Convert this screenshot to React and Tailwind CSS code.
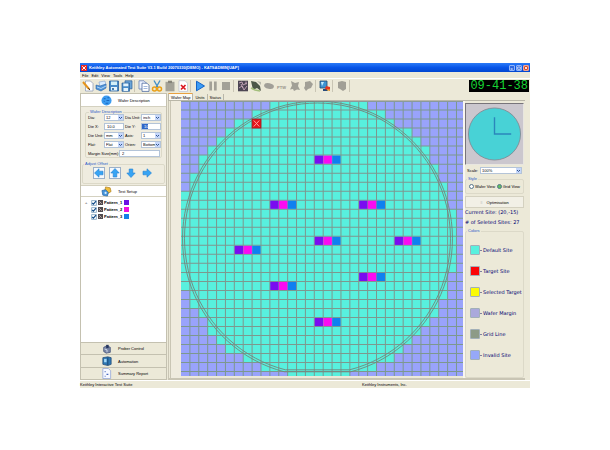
import React from "react";

const LEFT = [10, 8, 6, 5, 4, 3, 2, 2, 1, 1, 0, 0, 0, 0, 0, 0, 0, 0, 0, 0, 0, 1, 1, 2, 3, 3, 4, 5, 7, 9, 12];
const RIGHT = [21, 23, 24, 26, 27, 28, 28, 29, 29, 30, 30, 30, 31, 31, 31, 31, 31, 31, 31, 30, 30, 30, 29, 29, 28, 27, 26, 25, 24, 22, 19];
const SITES = [[15, 6], [10, 11], [20, 11], [15, 15], [24, 15], [6, 16], [20, 19], [10, 20], [15, 24]];
const CW = 8.855;
const CH = 9.02;
const W = 281;
const H = 275;

function WaferMap() {
  return (
    <svg className="block h-full w-full" viewBox={`0 0 ${W} ${H}`} preserveAspectRatio="none" role="img" aria-label="Wafer map">
      <rect width={W} height={H} fill="#99a3fb" />
      {LEFT.map((l, r) => (
        <rect key={r} x={l * CW} y={r * CH} width={(RIGHT[r] - l) * CW} height={CH + 0.2} fill="#58f0de" />
      ))}
      <g stroke="#7d988e" strokeWidth="1">
        {Array.from({ length: 31 }, (_, i) => (
          <path key={i} d={`M${(i + 1) * CW} 0V${H}`} />
        ))}
        {Array.from({ length: 30 }, (_, i) => (
          <path key={i} d={`M0 ${(i + 1) * CH}H${W}`} />
        ))}
      </g>
      <path d="M0 .5H281" stroke="#8a9a9a" />
      {SITES.map(([c, r]) => (
        <g key={`${c}-${r}`}>
          <rect x={c * CW + 0.4} y={r * CH + 0.5} width={CW - 0.6} height={CH - 0.9} fill="#7a0cf0" />
          <rect x={(c + 1) * CW + 0.2} y={r * CH + 0.5} width={CW - 0.4} height={CH - 0.9} fill="#fb0af2" />
          <rect x={(c + 2) * CW + 0.2} y={r * CH + 0.5} width={CW - 0.6} height={CH - 0.9} fill="#0f80f0" />
        </g>
      ))}
      <g fill="none" stroke="#74847c" strokeWidth="0.9">
        <path d="M103 270.8A134.5 137.4 0 1 1 169 270.8Z" />
        <path d="M104 268.8A132.5 135.4 0 1 1 168 268.8Z" />
      </g>
      <rect x={8 * CW} y={2 * CH} width={CW} height={CH} fill="#e8141c" stroke="#8c2020" strokeWidth="0.7" />
      <path d="M72.5 19.5l5.5 6M78 19.5l-5.5 6" stroke="#ffb0a8" strokeWidth="0.9" />
    </svg>
  );
}

function Svg({ children, className = "size-3" }) {
  return (
    <svg className={`${className} shrink-0`} viewBox="0 0 12 12" fill="none" aria-hidden="true">
      {children}
    </svg>
  );
}

const TOOLS = [
  ["New", <><path d="M3.5 1h5l2.5 2.5V11H3.5z" fill="#fff" stroke="#8795b5" strokeWidth=".7" /><path d="M1 2l6 7" stroke="#e5941c" strokeWidth="2" /><path d="M6.5 8l1.3 2" stroke="#503010" /></>],
  ["Open", <><path d="M4 2l6-1 1 4-6 2z" fill="#d9ecff" stroke="#7fa0cc" strokeWidth=".6" /><path d="M1 5l4 1 6-2v4l-5 3-5-2z" fill="#4c93d8" stroke="#2f66a8" strokeWidth=".6" /><path d="M2 7l4 1.5L11 6" stroke="#cfe4fa" strokeWidth=".8" /></>],
  ["Save", <><path d="M1.5 1h9v10h-9z" fill="#4a8cc8" stroke="#2d5f98" strokeWidth=".8" /><path d="M3 1.5h6V5H3z" fill="#d4f0f8" /><path d="M3 7h6v3.5H3z" fill="#e8f4fb" /><path d="M4 8h2v2H4z" fill="#487dab" /></>],
  ["Save all", <><path d="M4 .8h7v8H4z" fill="#6aa5d8" stroke="#2d5f98" strokeWidth=".7" /><path d="M1 3h7.5v8.3H1z" fill="#4a8cc8" stroke="#2d5f98" strokeWidth=".7" /><path d="M2.3 3.4h5v2.8h-5zM2.5 8h4.5v3H2.5z" fill="#e2f2fb" /></>],
  ["Copy", <><path d="M1 .8h5l2 2V9H1z" fill="#eef4ff" stroke="#6680b4" strokeWidth=".8" /><path d="M4 3.2h5l2 2v6.2H4z" fill="#fff" stroke="#4b689f" strokeWidth=".8" /><path d="M5.5 6.5h4M5.5 8.5h4" stroke="#7b9bd0" strokeWidth=".7" /></>],
  ["Cut", <><path d="M3 .5l4 7M9 .5l-4 7" stroke="#4290c8" strokeWidth="1.4" /><circle cx="3.5" cy="9" r="2" stroke="#e9a018" strokeWidth="1.5" /><circle cx="8.5" cy="9" r="2" stroke="#e9a018" strokeWidth="1.5" /></>],
  ["Paste", <><path d="M1.5 1.8h9v9.5h-9z" fill="#a4a297" /><path d="M4 .7h4v2.4H4z" fill="#858378" /></>],
  ["Delete", <><path d="M2 .7h6l2.5 2.5v8.2H2z" fill="#fff" stroke="#b9bed0" strokeWidth=".7" /><path d="M4 5l4.5 4.5M8.5 5L4 9.5" stroke="#db1721" strokeWidth="1.7" /></>],
  ["Run", <path d="M2.5 1.2L10.5 6l-8 4.8z" fill="#3c9cf4" stroke="#1263c8" strokeWidth="1" />],
  ["Pause", <path d="M2.3 1.5h2.7v9H2.3zM7 1.5h2.7v9H7z" fill="#a3a197" />],
  ["Stop", <path d="M2 2h8v8H2z" fill="#a3a197" />],
  ["Pattern", <><path d="M1 .7h10v10.6H1z" fill="#4d4654" /><path d="M2 3l3-1 1 3 4-2M2 8l3-2 2 4 3-4M4 4l2 4M9 1.5v3" stroke="#c8a9bc" strokeWidth=".9" /></>],
  ["Probe", <><path d="M1 1l5 1 4 4 1 5-4-3-4 2z" fill="#4c5648" /><path d="M1 8l4 2 5 1" stroke="#a3be7c" strokeWidth="1.5" /><path d="M7 1l4 1v3z" fill="#b8b8ac" /></>],
  ["Chip", <ellipse cx="6" cy="6" rx="5" ry="2.8" fill="#a19f98" transform="rotate(12 6 6)" />],
  ["PTW", null],
  ["Link", <path d="M2 1l4 2 4-1-1 4 2 4-3-.5L5 11l-1-2-3 .5 2-4z" fill="#a19f96" />],
  ["Tag", <path d="M3 2l5-1 3 3-2 4-3 1-2 2-2-3 1-2z" fill="#a19f96" />],
  ["Monitor", <><path d="M1 1h7v7H1z" fill="#3d93d2" stroke="#24496e" strokeWidth=".8" /><path d="M2 2h3L3 6z" fill="#c4ecff" /><path d="M4 9h5v2H4z" fill="#284b7c" /><path d="M7 6l4 1v4l-5-2z" fill="#e33620" /><path d="M8 10h3" stroke="#f8cf35" /></>],
  ["Options", <path d="M2 2l4-1 4 1v7l-3 2-3-2-2-1z" fill="#a19f96" />],
];

const SEPARATOR_AFTER = { 3: true, 7: true, 10: true, 16: true, 17: true, 18: true };

function ToolBar() {
  return (
    <div className="flex h-[15px] items-center justify-between border-t border-white bg-[#ece9d8] pb-px">
      <div className="flex items-center pl-px">
        {TOOLS.map(([name, art], i) => (
          <React.Fragment key={name}>
            <button type="button" aria-label={name} className="flex h-3 w-[13px] items-center justify-center">
              {art ? <Svg>{art}</Svg> : <span className="pt-[5px] text-[4px] leading-none font-bold text-[#96948a]">PTW</span>}
            </button>
            {SEPARATOR_AFTER[i] && <span className="mx-px h-3 w-[2px] border-l border-[#c9c5b4]" />}
          </React.Fragment>
        ))}
      </div>
      <div className="mr-px flex h-3 items-center bg-black px-px font-['Liberation_Mono',monospace] text-[12px] leading-none whitespace-nowrap text-[#16d535]">
        09-41-38
      </div>
    </div>
  );
}

function Select({ id, value, className = "" }) {
  return (
    <span className={`flex h-[7px] min-w-0 border border-[#b4c4d8] bg-white ${className}`}>
      <select id={id} defaultValue={value} className="min-w-0 flex-1 appearance-none bg-white pl-px text-[4px] leading-[5px] text-black outline-none">
        <option>{value}</option>
      </select>
      <svg className="h-[5px] w-[5px] shrink-0 bg-[#c5d7fb]" viewBox="0 0 5 5" aria-hidden="true">
        <path d="M1 2l1.5 1.5L4 2" fill="none" stroke="#31548f" strokeWidth="1" />
      </svg>
    </span>
  );
}

function Group({ title, className = "", children }) {
  return (
    <fieldset className={`min-w-0 rounded-[2px] border border-[#dcd9c8] ${className}`}>
      <legend className="ml-px px-px text-[4px] leading-[4px] text-[#2858c8]">{title}</legend>
      {children}
    </fieldset>
  );
}

function Field({ id, label, value, text, selected }) {
  return (
    <>
      <label htmlFor={id} className="whitespace-nowrap">{label}</label>
      {text ? (
        <input id={id} defaultValue={value} className={`h-[7px] w-full min-w-0 border border-[#b4c4d8] bg-white px-[2px] text-[4px] leading-[5px] ${selected ? "bg-linear-to-r from-[#2f66c8] from-35% to-white to-35% text-white" : ""}`} />
      ) : (
        <Select id={id} value={value} />
      )}
    </>
  );
}

function NavButton({ label, children, className = "" }) {
  return (
    <button type="button" className={`grid w-full grid-cols-[31px_1fr] items-center text-left ${className}`}>
      <span className="flex justify-end">{children}</span>
      <span className="pl-[6px]">{label}</span>
    </button>
  );
}

function Arrow({ turn, label, boxed }) {
  return (
    <button type="button" aria-label={label} className={`flex size-[12px] items-center justify-center ${boxed ? "border border-[#9cb0c8] bg-[#f4f8fc]" : ""}`}>
      <svg className="size-[10px] shrink-0" viewBox="0 0 10 10" aria-hidden="true">
        <path transform={`rotate(${turn} 5 5)`} d="M.5 5L5 .8v2.4h4v3.6H5v2.4z" fill="#37a4f4" stroke="#2380d2" strokeWidth=".6" />
      </svg>
    </button>
  );
}

const PATTERNS = [
  ["Pattern_1", "bg-[#6c10e4]"],
  ["Pattern_2", "bg-[#f010e0]"],
  ["Pattern_3", "bg-[#1480e8]"],
];

function SidePanel() {
  return (
    <aside className="flex w-[87px] shrink-0 flex-col border border-[#c4c1b0] bg-[#efecdf]">
      <NavButton label="Wafer Description" className="h-3 bg-white">
        <Svg className="size-[11px]"><circle cx="6" cy="6" r="5.5" fill="#3c9cf0" /><path d="M3 4h2M7 3h2M3 7h1M6 6h3M5 9h3" stroke="#1561bd" /></Svg>
      </NavButton>
      <div className="border-t border-[#d4d1c0] px-1 pt-[3px]">
        <Group title="Wafer Description" className="h-[48px] px-[2px]">
          <div className="grid grid-cols-[15px_20px_15px_20px] items-center gap-x-px gap-y-[2px]">
            <Field id="dia" label="Dia:" value="12" />
            <Field id="dia-unit" label="Dia Unit:" value="inch" />
            <Field id="die-x" label="Die X:" value="10.0" text />
            <Field id="die-y" label="Die Y:" value="10" text selected />
            <Field id="die-unit" label="Die Unit:" value="mm" />
            <Field id="axis" label="Axis:" value="1" />
            <Field id="flat" label="Flat:" value="Flat" />
            <Field id="orien" label="Orien:" value="Bottom" />
          </div>
          <div className="mt-[2px] grid grid-cols-[30px_41px] items-center gap-px">
            <Field id="margin" label="Margin Size(mm):" value="2" text />
          </div>
        </Group>
      </div>
      <div className="px-px pt-1">
        <Group title="Adjust Offset" className="h-[22px]">
          <div className="flex gap-1 pt-px pl-[10px]">
            <Arrow turn={0} label="Left" boxed />
            <Arrow turn={90} label="Up" boxed />
            <Arrow turn={270} label="Down" />
            <Arrow turn={180} label="Right" />
          </div>
        </Group>
      </div>
      <NavButton label="Test Setup" className="mt-px h-3 border-y border-[#d4d1c0] bg-white">
        <Svg className="size-[11px]"><path d="M5 1l5 1 1 4-3 2-4-2z" fill="#f0bd3c" stroke="#a87818" strokeWidth=".7" /><path d="M1 5l4-1 3 3-1 4-5-1z" fill="#4595dc" stroke="#235f9c" strokeWidth=".7" /><circle cx="5" cy="7.5" r="1.2" fill="#d8ecfc" /></Svg>
      </NavButton>
      <ul className="flex-1 bg-white pt-[2px] pl-1">
        {PATTERNS.map(([name, color], i) => (
          <li key={name} className="flex h-[7px] items-center gap-px font-bold">
            <span className="w-[5px] text-[#888]">{i === 0 ? "+" : ""}</span>
            <input id={name} type="checkbox" defaultChecked className="sr-only" />
            <label htmlFor={name} className="flex items-center gap-px whitespace-nowrap">
              <svg className="size-[6px]" viewBox="0 0 5 5" aria-hidden="true"><path d="M.5.5h4v4h-4z" fill="#fff" stroke="#6f98b8" strokeWidth=".6" /><path d="M1 2.5l1 1L4.2 1" fill="none" stroke="#124c88" /></svg>
              <svg className="size-[5px]" viewBox="0 0 5 5" aria-hidden="true"><path d="M0 0h5v5H0z" fill="#514b50" /><path d="M1 1l3 3M1 4l2-2" stroke="#c5b5b5" strokeWidth=".7" /></svg>
              {name}
            </label>
            <span className={`ml-px size-[5px] ${color}`} />
          </li>
        ))}
      </ul>
      <NavButton label="Prober Control" className="h-3 border-t border-[#c4c1b0] bg-[#ece9d8]">
        <Svg className="size-[10px]"><path d="M2 4l4-2 4 2v6l-5 1-3-2z" fill="#7885a5" stroke="#36466f" strokeWidth=".8" /><path d="M5 1h3v4H5z" fill="#25365f" /><path d="M3 6l3 1v3" stroke="#dce6f7" /></Svg>
      </NavButton>
      <NavButton label="Automation" className="h-[13px] border-t border-[#c4c1b0] bg-[#ece9d8]">
        <Svg className="size-[10px]"><path d="M1 2l6-1 4 1v8l-4 1.5L1 10z" fill="#2f78b4" stroke="#173e6a" strokeWidth=".8" /><path d="M2.5 3.5h3v4h-3z" fill="#a3d8f8" /><path d="M7 2v9" stroke="#173e6a" /></Svg>
      </NavButton>
      <NavButton label="Summary Report" className="h-3 border-t border-[#c4c1b0] bg-[#ece9d8]">
        <Svg className="size-[11px]"><path d="M2 .5h6l2.5 2.5v8.5H2z" fill="#f6f8ff" stroke="#8c9fd4" strokeWidth=".8" /><path d="M4 4h1M6 7h2M4 9h1" stroke="#4565bc" strokeWidth="1.2" /></Svg>
      </NavButton>
    </aside>
  );
}

const LEGEND = [
  ["Default Site", "bg-[#58f0de]"],
  ["Target Site", "bg-[#fa0508]"],
  ["Selected Target", "bg-[#fbfb05]"],
  ["Wafer Margin", "bg-[#aaa9dc]"],
  ["Grid Line", "bg-[#8d9b87]"],
  ["Invalid Site", "bg-[#96a8f8]"],
];

function Radio({ label, checked }) {
  return (
    <label className="flex items-center gap-px whitespace-nowrap">
      <input type="radio" name="style" defaultChecked={checked} className="size-[5px] appearance-none rounded-full border border-[#55758c] bg-white checked:bg-[#5fc060]" />
      {label}
    </label>
  );
}

function InfoPanel() {
  return (
    <aside className="flex w-[60px] shrink-0 flex-col pt-[2px] pr-px">
      <div className="h-[62px] border border-t-[#77747a] border-r-[#e8e6e0] border-b-[#e8e6e0] border-l-[#77747a] bg-[#cbc7ce]">
        <svg className="block h-full w-full" viewBox="0 0 58 60" role="img" aria-label="Wafer preview">
          <circle cx="29" cy="30" r="26.5" fill="#48d2d6" stroke="#81838e" strokeWidth=".8" />
          <path d="M29 13v17h17" fill="none" stroke="#2a86bc" strokeWidth="1.4" />
        </svg>
      </div>
      <div className="flex items-center gap-px px-[2px] pt-[2px]">
        <label htmlFor="scale" className="w-[12px]">Scale:</label>
        <Select id="scale" value="100%" className="flex-1" />
      </div>
      <Group title="Style" className="mt-[3px] h-[17px]">
        <div className="flex justify-between px-[3px] pt-[3px]">
          <Radio label="Wafer View" />
          <Radio label="Grid View" checked />
        </div>
      </Group>
      <button type="button" className="mt-[2px] flex h-3 items-center justify-center gap-1 border border-[#d4d1c0] bg-[#f2f0e6]">
        <span className="text-[#aaa]">≡</span>Optimisation
      </button>
      <p className="mt-px whitespace-nowrap font-['DejaVu_Sans',sans-serif] text-[5px] leading-[7px] text-[#000070]">Current Site: (20,-15)</p>
      <p className="mt-[3px] whitespace-nowrap font-['DejaVu_Sans',sans-serif] text-[5px] leading-[7px] text-[#000070]"># of Seleted Sites: 27</p>
      <Group title="Colors" className="mt-[3px] flex-1">
        <ul className="flex flex-col gap-[11px] pt-3 pl-1">
          {LEGEND.map(([name, color]) => (
            <li key={name} className="flex h-[10px] items-center font-['DejaVu_Sans',sans-serif] whitespace-nowrap text-[5px] text-[#000070]">
              <span className={`size-[10px] shrink-0 rounded-[1px] border border-[#a2b0b8] ${color}`} />
              <span className="mr-px h-px w-[2px] bg-[#8080a0]" />
              {name}
            </li>
          ))}
        </ul>
      </Group>
    </aside>
  );
}

function TitleBar() {
  return (
    <header className="flex h-[9px] items-center gap-[2px] bg-linear-to-b from-[#2a7af8] via-[#0755e8] to-[#0347d0] pr-px pl-px text-white">
      <svg className="size-[6px]" viewBox="0 0 5 5" aria-hidden="true"><path d="M0 0h5v5H0z" fill="#e42b25" /><path d="M1 1l3 3M4 1L1 4" stroke="#fff" strokeWidth=".8" /></svg>
      <h1 className="flex-1 whitespace-nowrap text-[4px] font-bold">Keithley Automated Test Suite V3.1 Build 20070330(DEMO) - KATSADMIN[UAP]</h1>
      <div className="flex gap-px">
        <button type="button" aria-label="Minimize" className="size-[6px] rounded-[1px] border border-[#8fb2f8] bg-[#2f68e0]"><Svg className="block size-1"><path d="M2 9h6" stroke="#fff" strokeWidth="3" /></Svg></button>
        <button type="button" aria-label="Restore" className="size-[6px] rounded-[1px] border border-[#8fb2f8] bg-[#2f68e0]"><Svg className="block size-1"><path d="M2 3h8v7H2z" stroke="#fff" strokeWidth="2" /></Svg></button>
        <button type="button" aria-label="Close" className="size-[6px] rounded-[1px] border border-[#f0a490] bg-[#d8482c]"><Svg className="block size-1"><path d="M2 2l8 8M10 2l-8 8" stroke="#fff" strokeWidth="2.5" /></Svg></button>
      </div>
    </header>
  );
}

export default function App() {
  return (
    <main className="min-h-screen bg-white px-20 pt-[63px] pb-16">
      <div className="flex flex-col bg-[#ece9d8] font-['Liberation_Sans',sans-serif] text-[4px] leading-[5px] text-black">
        <TitleBar />
        <nav className="flex h-[6px] items-center gap-[3px] pl-[2px]">
          {["File", "Edit", "View", "Tools", "Help"].map((m) => (
            <button key={m} type="button">{m}</button>
          ))}
        </nav>
        <ToolBar />
        <div className="flex h-[287px] pr-[5px]">
          <SidePanel />
          <section className="ml-px flex min-w-0 flex-1 flex-col">
            <div className="flex h-2 items-end border-b border-[#b9b6a8]" role="tablist">
              <button type="button" role="tab" aria-selected="true" className="h-[7px] rounded-t-[1px] border-x border-t border-t-[#e8a040] border-[#b9b6a8] bg-[#fbfaf6] px-[2px]">Wafer Map</button>
              <button type="button" role="tab" aria-selected="false" className="h-[6px] border-r border-[#b9b6a8] px-[2px]">Units</button>
              <button type="button" role="tab" aria-selected="false" className="h-[6px] border-r border-[#b9b6a8] px-[2px]">Status</button>
            </div>
            <div className="flex flex-1 border-b-2 border-l border-[#c9c5b4]">
              <div className="ml-px w-[11px] shrink-0 border-l border-[#c9c5b4] bg-[#efebde]" />
              <div className="mb-px h-[275px] min-w-0 flex-1"><WaferMap /></div>
              <div className="w-[2px] shrink-0 bg-[#f8f6f0]" />
              <InfoPanel />
            </div>
          </section>
        </div>
        <footer className="flex h-[8px] items-center border-t border-white">
          <span className="w-[282px]">Keithley Interactive Test Suite</span>
          <span>Keithley Instruments, Inc.</span>
        </footer>
      </div>
    </main>
  );
}
